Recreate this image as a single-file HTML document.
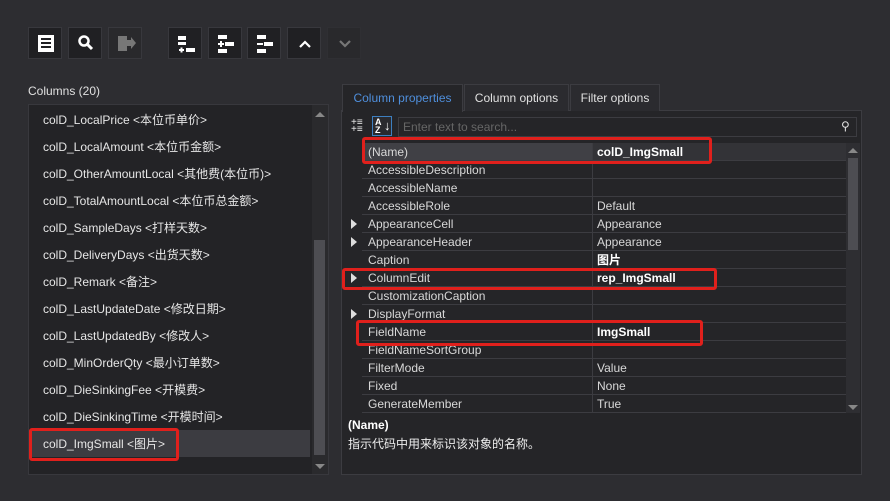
<!DOCTYPE html>
<html><head><meta charset="utf-8"><style>
*{margin:0;padding:0;box-sizing:border-box}
body{width:890px;height:501px;background:#2d2d31;font-family:"Liberation Sans","Noto Sans CJK SC",sans-serif;font-size:12px;color:#dcdcdc;position:relative;overflow:hidden}
.a{position:absolute}
.btn{position:absolute;top:27px;width:34px;height:32px;background:#202023;border:1px solid #38383d}
.btn svg{position:absolute;left:0;top:0}
.item{position:absolute;left:43px;height:27px;line-height:28px;font-size:12px;color:#e6e6e6;white-space:nowrap}
.row{position:absolute;left:362px;width:484px;height:18px;border-bottom:1px solid #3c3c41;font-size:12px;line-height:19px;color:#d8d8d8}
.row .n{position:absolute;left:6px}
.row .v{position:absolute;left:235px}
.row .sep{position:absolute;left:230px;top:0;width:1px;height:18px;background:#3c3c41}
.arr{position:absolute;left:351px;width:0;height:0;border-left:6px solid #ddd;border-top:5px solid transparent;border-bottom:5px solid transparent}
.red{position:absolute;border:3px solid #e0201c;border-radius:3px}
.tab{position:absolute;top:84px;height:27px;line-height:26px;text-align:center;font-size:12px;border:1px solid #3c3c41;border-bottom:none;background:#2b2b2f;color:#e0e0e0}
</style></head><body>
<div class="btn" style="left:28px"><svg width="34" height="32"><rect x="9" y="7" width="16" height="17" fill="#fff"/><rect x="12" y="10" width="10" height="2" fill="#202023"/><rect x="12" y="14" width="10" height="2" fill="#202023"/><rect x="12" y="18" width="10" height="2" fill="#202023"/></svg></div>
<div class="btn" style="left:68px"><svg width="34" height="32"><circle cx="15" cy="13" r="4.5" fill="none" stroke="#fff" stroke-width="2.5"/><line x1="18" y1="16" x2="23" y2="21" stroke="#fff" stroke-width="3"/></svg></div>
<div class="btn" style="left:108px;background:#29292c"><svg width="34" height="32"><rect x="9" y="8" width="9" height="15" fill="#777"/><path d="M17 12h5v-3l5 6-5 6v-3h-5z" fill="#777"/></svg></div>
<div class="btn" style="left:168px"><svg width="34" height="32"><rect x="9" y="8" width="8" height="4" fill="#fff"/><rect x="9" y="14" width="8" height="3" fill="#fff"/><path d="M10 22h5M12.5 19.5v5" stroke="#fff" stroke-width="2"/><rect x="17" y="20" width="9" height="4" fill="#fff"/></svg></div>
<div class="btn" style="left:208px"><svg width="34" height="32"><rect x="9" y="7" width="9" height="4" fill="#fff"/><path d="M9 16h6M12 13v6" stroke="#fff" stroke-width="2"/><rect x="16" y="14" width="9" height="4" fill="#fff"/><rect x="9" y="21" width="9" height="4" fill="#fff"/></svg></div>
<div class="btn" style="left:247px"><svg width="34" height="32"><rect x="9" y="7" width="9" height="4" fill="#fff"/><rect x="9" y="15" width="6" height="2" fill="#fff"/><rect x="16" y="14" width="9" height="4" fill="#fff"/><rect x="9" y="21" width="9" height="4" fill="#fff"/></svg></div>
<div class="btn" style="left:287px"><svg width="34" height="32"><path d="M12 19l5-5 5 5" fill="none" stroke="#fff" stroke-width="2.2"/></svg></div>
<div class="btn" style="left:327px;background:#29292c;border-color:#2f2f33"><svg width="34" height="32"><path d="M12 13l5 5 5-5" fill="none" stroke="#777" stroke-width="2.2"/></svg></div>

<div class="a" style="left:28px;top:84px;font-size:12px;color:#e0e0e0">Columns (20)</div>
<div class="a" style="left:28px;top:104px;width:301px;height:371px;background:#232326;border:1px solid #38383d"></div>
<div class="a" style="left:29px;top:430px;width:281px;height:27px;background:#3c3c41"></div>
<div class="a" style="left:312px;top:105px;width:16px;height:369px;background:#2a2a2d"></div>
<div class="a" style="left:314px;top:240px;width:11px;height:215px;background:#4d4d52"></div>
<div class="a" style="left:315px;top:112px;border-left:5px solid transparent;border-right:5px solid transparent;border-bottom:5px solid #888"></div>
<div class="a" style="left:315px;top:464px;border-left:5px solid transparent;border-right:5px solid transparent;border-top:5px solid #888"></div>
<div class="item" style="top:106px">colD_LocalPrice &lt;本位币单价&gt;</div>
<div class="item" style="top:133px">colD_LocalAmount &lt;本位币金额&gt;</div>
<div class="item" style="top:160px">colD_OtherAmountLocal &lt;其他费(本位币)&gt;</div>
<div class="item" style="top:187px">colD_TotalAmountLocal &lt;本位币总金额&gt;</div>
<div class="item" style="top:214px">colD_SampleDays &lt;打样天数&gt;</div>
<div class="item" style="top:241px">colD_DeliveryDays &lt;出货天数&gt;</div>
<div class="item" style="top:268px">colD_Remark &lt;备注&gt;</div>
<div class="item" style="top:295px">colD_LastUpdateDate &lt;修改日期&gt;</div>
<div class="item" style="top:322px">colD_LastUpdatedBy &lt;修改人&gt;</div>
<div class="item" style="top:349px">colD_MinOrderQty &lt;最小订单数&gt;</div>
<div class="item" style="top:376px">colD_DieSinkingFee &lt;开模费&gt;</div>
<div class="item" style="top:403px">colD_DieSinkingTime &lt;开模时间&gt;</div>
<div class="item" style="top:430px">colD_ImgSmall &lt;图片&gt;</div>
<div class="red" style="left:29px;top:428px;width:150px;height:33px"></div>

<div class="a" style="left:341px;top:110px;width:521px;height:365px;background:#252528;border:1px solid #3c3c41"></div>
<div class="tab" style="left:342px;width:121px;background:#252528;color:#4f8fdc;height:28px">Column properties</div>
<div class="tab" style="left:464px;width:105px">Column options</div>
<div class="tab" style="left:570px;width:90px">Filter options</div>
<div class="a" style="left:351px;top:119px;font-size:10px;line-height:7px;color:#eee">+≡<br>+≡</div>
<div class="a" style="left:372px;top:116px;width:20px;height:20px;border:1px solid #3d7fc0;background:#2a2a2e;font-size:9px;line-height:8px;color:#fff;padding:1px 2px;font-weight:bold">A<br>Z</div>
<div class="a" style="left:384px;top:118px;font-size:13px;color:#fff">↓</div>
<div class="a" style="left:398px;top:117px;width:459px;height:20px;border:1px solid #3c3c41;background:#252528;color:#666;line-height:19px;padding-left:4px">Enter text to search...</div>
<div class="a" style="left:841px;top:119px;font-size:12px;color:#ddd">⚲</div>
<div class="a" style="left:362px;top:143px;width:230px;height:18px;background:#404045"></div>
<div class="a" style="left:592px;top:143px;width:254px;height:18px;background:#333337"></div>
<div class="row" style="top:143px"><span class="n">(Name)</span><span class="sep"></span><b class="v" style="color:#fff">colD_ImgSmall</b></div>
<div class="row" style="top:161px"><span class="n">AccessibleDescription</span><span class="sep"></span></div>
<div class="row" style="top:179px"><span class="n">AccessibleName</span><span class="sep"></span></div>
<div class="row" style="top:197px"><span class="n">AccessibleRole</span><span class="sep"></span><span class="v">Default</span></div>
<div class="row" style="top:215px"><span class="n">AppearanceCell</span><span class="sep"></span><span class="v">Appearance</span></div>
<div class="row" style="top:233px"><span class="n">AppearanceHeader</span><span class="sep"></span><span class="v">Appearance</span></div>
<div class="row" style="top:251px"><span class="n">Caption</span><span class="sep"></span><b class="v" style="color:#fff">图片</b></div>
<div class="row" style="top:269px"><span class="n">ColumnEdit</span><span class="sep"></span><b class="v" style="color:#fff">rep_ImgSmall</b></div>
<div class="row" style="top:287px"><span class="n">CustomizationCaption</span><span class="sep"></span></div>
<div class="row" style="top:305px"><span class="n">DisplayFormat</span><span class="sep"></span></div>
<div class="row" style="top:323px"><span class="n">FieldName</span><span class="sep"></span><b class="v" style="color:#fff">ImgSmall</b></div>
<div class="row" style="top:341px"><span class="n">FieldNameSortGroup</span><span class="sep"></span></div>
<div class="row" style="top:359px"><span class="n">FilterMode</span><span class="sep"></span><span class="v">Value</span></div>
<div class="row" style="top:377px"><span class="n">Fixed</span><span class="sep"></span><span class="v">None</span></div>
<div class="row" style="top:395px"><span class="n">GenerateMember</span><span class="sep"></span><span class="v">True</span></div>
<div class="arr" style="top:219px"></div><div class="arr" style="top:237px"></div><div class="arr" style="top:273px"></div><div class="arr" style="top:309px"></div>
<div class="a" style="left:846px;top:143px;width:14px;height:270px;background:#2e2e32"></div>
<div class="a" style="left:848px;top:158px;width:10px;height:92px;background:#4d4d52"></div>
<div class="a" style="left:848px;top:148px;border-left:5px solid transparent;border-right:5px solid transparent;border-bottom:5px solid #888"></div>
<div class="a" style="left:848px;top:405px;border-left:5px solid transparent;border-right:5px solid transparent;border-top:5px solid #888"></div>
<div class="a" style="left:348px;top:418px;font-weight:bold;color:#fff">(Name)</div>
<div class="a" style="left:348px;top:435px;color:#eee">指示代码中用来标识该对象的名称。</div>
<div class="red" style="left:362px;top:137px;width:350px;height:27px"></div>
<div class="red" style="left:342px;top:268px;width:375px;height:22px"></div>
<div class="red" style="left:356px;top:320px;width:347px;height:26px"></div>
</body></html>
